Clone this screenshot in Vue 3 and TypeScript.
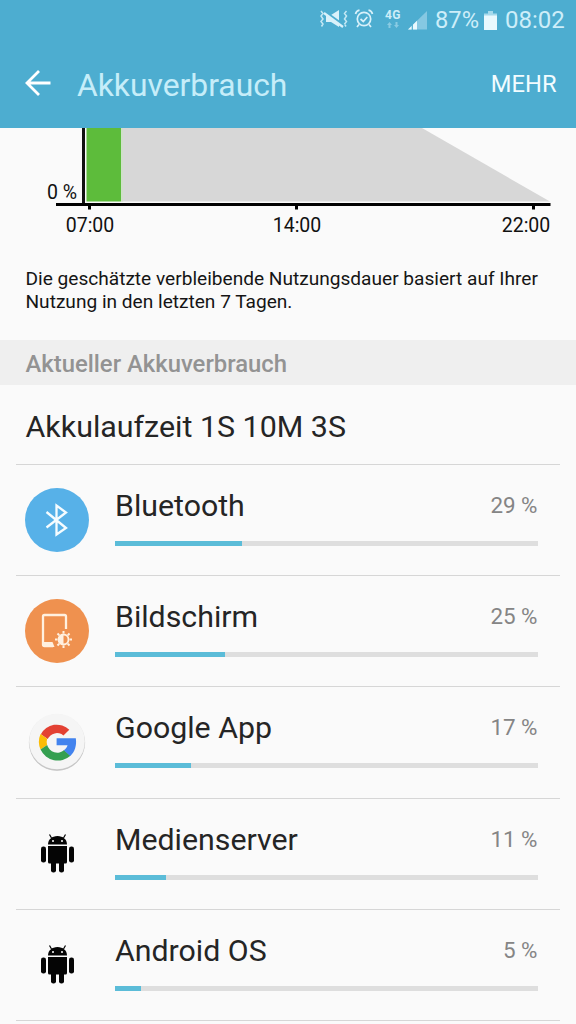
<script setup lang="ts">
interface Usage {
  name: string
  percent: number
  width: number
  icon: 'bluetooth' | 'display' | 'google' | 'android'
}

const usages: Usage[] = [
  { name: 'Bluetooth', percent: 29, width: 30, icon: 'bluetooth' },
  { name: 'Bildschirm', percent: 25, width: 26, icon: 'display' },
  { name: 'Google App', percent: 17, width: 18, icon: 'google' },
  { name: 'Medienserver', percent: 11, width: 12, icon: 'android' },
  { name: 'Android OS', percent: 5, width: 6.1, icon: 'android' },
]

const rays = [0, 45, 90, 135, 180, 225, 270, 315]
</script>

<template>
  <main class="screen">
    <header class="header">
      <div class="status">
        <svg class="mute" viewBox="0 0 30 20" width="30" height="20">
          <g fill="none" stroke="#c5e8f4" stroke-width="1.5">
            <path d="M2 2l2 2.500-2 2.500 2 3-2 2.500 2 2.500-1.500 2.500M27.500 2l-2 2.500 2 2.500-2 3 2 2.500-2 2.500 1.500 2.500" />
          </g>
          <path d="M7 6h5l8-5v17l-8-5H7z" fill="#d9f1fa" />
          <path d="M5 2L25 16.500" stroke="#4dadd0" stroke-width="2.500" />
          <path d="M5 4L24 18" stroke="#d9f1fa" stroke-width="2.200" />
        </svg>
        <svg class="alarm" viewBox="0 0 20 20" width="20" height="20" fill="none" stroke="#d9f1fa" stroke-width="1.700">
          <circle cx="10" cy="10" r="6.700" />
          <path d="M6.500 10l2.800 2.500 4-4.500M1.500 5C2 3 3.500 1.500 5.500 1.200M14.500 1.200C16.500 1.500 18 3 18.500 5M5 15.500l-2 2.500M15 15.500l2 2.500" />
        </svg>
        <div class="network">
          <span>4G</span>
          <svg viewBox="0 0 12 6" width="12" height="6" fill="#9ed5ea" opacity=".75">
            <path d="M0 3L2.500 0 5 3H3.500v3h-2V3zM7 3h1.500V0h2v3H12L9.500 6z" />
          </svg>
        </div>
        <svg class="signal" viewBox="0 0 19 19" width="19" height="19">
          <path d="M0 18.500L19 0v18.500z" fill="#86c8e2" />
          <path d="M0 18.500L9 9.800v8.700z" fill="#e9f9fe" />
          <path d="M4.300 13v6" stroke="#4dadd0" stroke-width="1.200" />
        </svg>
        <span class="charge">87%</span>
        <svg class="battery" viewBox="0 0 13 19" width="13" height="19">
          <path d="M0 2.500h4V0h5v2.500h4V5H0z" fill="#a5daec" />
          <path d="M0 4.500h13V19H0z" fill="#e9f9fe" />
        </svg>
        <span class="clock">08:02</span>
      </div>
      <div class="toolbar">
        <svg class="back" viewBox="0 0 26 26" width="26" height="26" fill="none" stroke="#fff" stroke-width="2.800">
          <path d="M25.500 13H2M14 1L2 13l12 12" />
        </svg>
        <h1>Akkuverbrauch</h1>
        <span class="more">MEHR</span>
      </div>
    </header>

    <section class="forecast">
      <svg class="chart" viewBox="0 128 576 112" width="576" height="112">
        <path d="M121 128h301L550 201.500H121z" fill="#d7d7d7" />
        <path d="M121 128h2v73.500h-2z" fill="#cfe0c9" />
        <path d="M86.500 128H121v73.500H86.500z" fill="#5dbc3b" />
        <path d="M82 128h3v75h-3z" fill="#111" />
        <path d="M56 203h494.500v3H56zM88 205h3v4.500h-3zM295 205h3v4.500h-3zM532 205h3v4.500h-3z" fill="#000" />
        <g class="axis-text">
          <text x="47" y="198.500">0 %</text>
          <text x="90" y="232" text-anchor="middle">07:00</text>
          <text x="297" y="232" text-anchor="middle">14:00</text>
          <text x="526" y="232" text-anchor="middle">22:00</text>
        </g>
      </svg>
      <p>Die geschätzte verbleibende Nutzungsdauer basiert auf Ihrer<br />Nutzung in den letzten 7 Tagen.</p>
    </section>

    <h2>Aktueller Akkuverbrauch</h2>
    <div class="runtime">Akkulaufzeit 1S 10M 3S</div>

    <ul class="list">
      <li v-for="item in usages" :key="item.name" class="row">
        <svg class="icon" viewBox="0 0 64 64" width="64" height="64">
          <template v-if="item.icon === 'bluetooth'">
            <circle cx="32" cy="32" r="32" fill="#57b1e8" />
            <path d="M21.500 24L41 40l-9.500 6.500V17.500l9.500 7L21.500 39.500" fill="none" stroke="#f5fcff" stroke-width="2.300" />
          </template>
          <template v-else-if="item.icon === 'display'">
            <circle cx="32" cy="32" r="32" fill="#ef914f" />
            <path d="M28 47H19.500a1.500 1.500 0 0 1-1.500-1.500v-28A1.500 1.500 0 0 1 19.500 16h20a1.500 1.500 0 0 1 1.500 1.500V30" fill="none" stroke="#fff0df" stroke-width="2.300" />
            <path d="M18 43h9.500l2 5H19z" fill="#fff0df" />
            <circle cx="38.500" cy="40.500" r="5" fill="none" stroke="#fff0df" stroke-width="1.800" />
            <path d="M38.500 35.500a5 5 0 0 0 0 10z" fill="#fff0df" />
            <path v-for="ray in rays" :key="ray" d="M38.500 34.500V32" :transform="`rotate(${ray} 38.500 40.500)`" stroke="#fff0df" stroke-width="2" />
          </template>
          <template v-else-if="item.icon === 'google'">
            <circle cx="32" cy="32.500" r="28.200" fill="#dedede" />
            <circle cx="32" cy="33" r="27.800" fill="#c6c6c6" />
            <circle cx="32" cy="31.500" r="27.800" fill="#f5f5f5" />
            <g transform="translate(-2 -1.400) scale(1.050)">
              <path d="M44.090 20.200A17 17 0 0 0 17 24.500l6.500 4.500A9.800 9.800 0 0 1 38.500 25.500z" fill="#e34133" />
              <path d="M16.700 24.200a18.700 18.700 0 0 0 0 14.800l6.300-4.300a10 10 0 0 1 0-6z" fill="#fbbc05" />
              <path d="M16.700 39a18.200 18.200 0 0 0 28.500 6l-6-5.500a10 10 0 0 1-16.200-4.800z" fill="#349f50" />
              <path d="M32 28.200h18.300c1 6.800-.9 12.800-5.300 17L38.900 39.700c1.800-1.100 3-2.700 3.500-4.700H32z" fill="#4283ee" />
            </g>
          </template>
          <template v-else>
            <g transform="translate(.5 -2)">
              <g fill="#050505">
                <path d="M22.500 24.500c0-5 4-8.500 9.500-8.500s9.500 3.500 9.500 8.500z" />
                <path d="M26 18l-2-3.500M38 18l2-3.500" stroke="#050505" stroke-width="1.200" />
                <path d="M22.500 26h19v16q0 1.500-1.500 1.500H24q-1.500 0-1.500-1.500z" />
                <rect x="15.500" y="26.500" width="5" height="16" rx="2.300" />
                <rect x="43.500" y="26.500" width="5" height="16" rx="2.300" />
                <rect x="25.500" y="40" width="5" height="12.500" rx="2.300" />
                <rect x="33.500" y="40" width="5" height="12.500" rx="2.300" />
              </g>
              <circle cx="27.500" cy="21" r="1" fill="#fff" />
              <circle cx="36.500" cy="21" r="1" fill="#fff" />
            </g>
          </template>
        </svg>
        <div class="detail">
          <div class="labels">
            <span class="name">{{ item.name }}</span>
            <span class="percent">{{ item.percent }} %</span>
          </div>
          <div class="track"><div class="fill" :style="{ width: item.width + '%' }"></div></div>
        </div>
      </li>
    </ul>
  </main>
</template>

<style>
html,
body {
  margin: 0;
  overflow: hidden;
  background: #fafafa;
}
</style>

<style scoped>
.screen {
  width: 576px;
  height: 1024px;
  overflow: hidden;
  background: #fafafa;
  color: #252525;
  font-family: Roboto, sans-serif;
}
.header {
  height: 128px;
  background: #4dadd0;
}
.status {
  display: flex;
  align-items: center;
  height: 40px;
  padding-left: 319px;
  color: #cdeef9;
  font-size: 24px;
  line-height: 40px;
  white-space: nowrap;
}
.status svg,
.status span {
  flex: none;
}
.status .mute,
.status .alarm {
  margin-top: -2px;
}
.status .alarm {
  margin-left: 5px;
}
.network {
  display: flex;
  flex: none;
  flex-direction: column;
  align-items: center;
  gap: 2px;
  width: 16px;
  margin: -2px 0 0 11px;
  font-size: 12px;
  font-weight: 700;
  line-height: 10px;
}
.network span {
  letter-spacing: 0.5px;
}
.signal {
  margin-left: 7px;
}
.charge {
  width: 46px;
  margin-left: 8px;
  font-size: 23.700px;
}
.battery {
  margin-left: 3px;
}
.clock {
  margin-left: 8px;
}
.toolbar {
  display: flex;
  align-items: center;
  height: 88px;
  padding: 0 19.500px 0 25px;
}
.back {
  margin-top: -2px;
}
h1 {
  flex: 1;
  margin: 1px 0 0 26px;
  color: #c6edf9;
  font-size: 31.800px;
  font-weight: 400;
  line-height: 40px;
}
.more {
  color: #f2fcff;
  font-size: 23.700px;
}
.forecast {
  height: 212px;
}
.chart {
  display: block;
}
.axis-text {
  fill: #111;
  font-size: 19.500px;
}
p {
  margin: 28px 0 0 25.500px;
  color: #151515;
  font-size: 19.100px;
  line-height: 22.500px;
  white-space: nowrap;
}
h2 {
  height: 45px;
  margin: 0;
  padding-left: 25.500px;
  background: #efefef;
  color: #939393;
  font-size: 23.850px;
  font-weight: 500;
  line-height: 48px;
}
.runtime {
  height: 79px;
  padding-left: 25.500px;
  font-size: 30.400px;
  line-height: 83px;
}
.list {
  margin: 0 16px;
  padding: 0;
  list-style: none;
}
.row {
  display: flex;
  box-sizing: border-box;
  height: 111.200px;
  padding: 23px 22.500px 0 9px;
  border-top: 1px solid #d6d6d6;
}
.row:last-child {
  height: 112.200px;
  border-bottom: 1px solid #d6d6d6;
}
.icon {
  flex: none;
}
.detail {
  flex: 1;
  margin-left: 26px;
}
.labels {
  display: flex;
  justify-content: space-between;
  height: 53px;
  line-height: 35px;
}
.name {
  font-size: 30.300px;
}
.percent {
  color: #858585;
  font-size: 22.400px;
}
.track {
  height: 5px;
  background: #dedede;
}
.fill {
  height: 5px;
  background: #5bbcd8;
}
</style>
